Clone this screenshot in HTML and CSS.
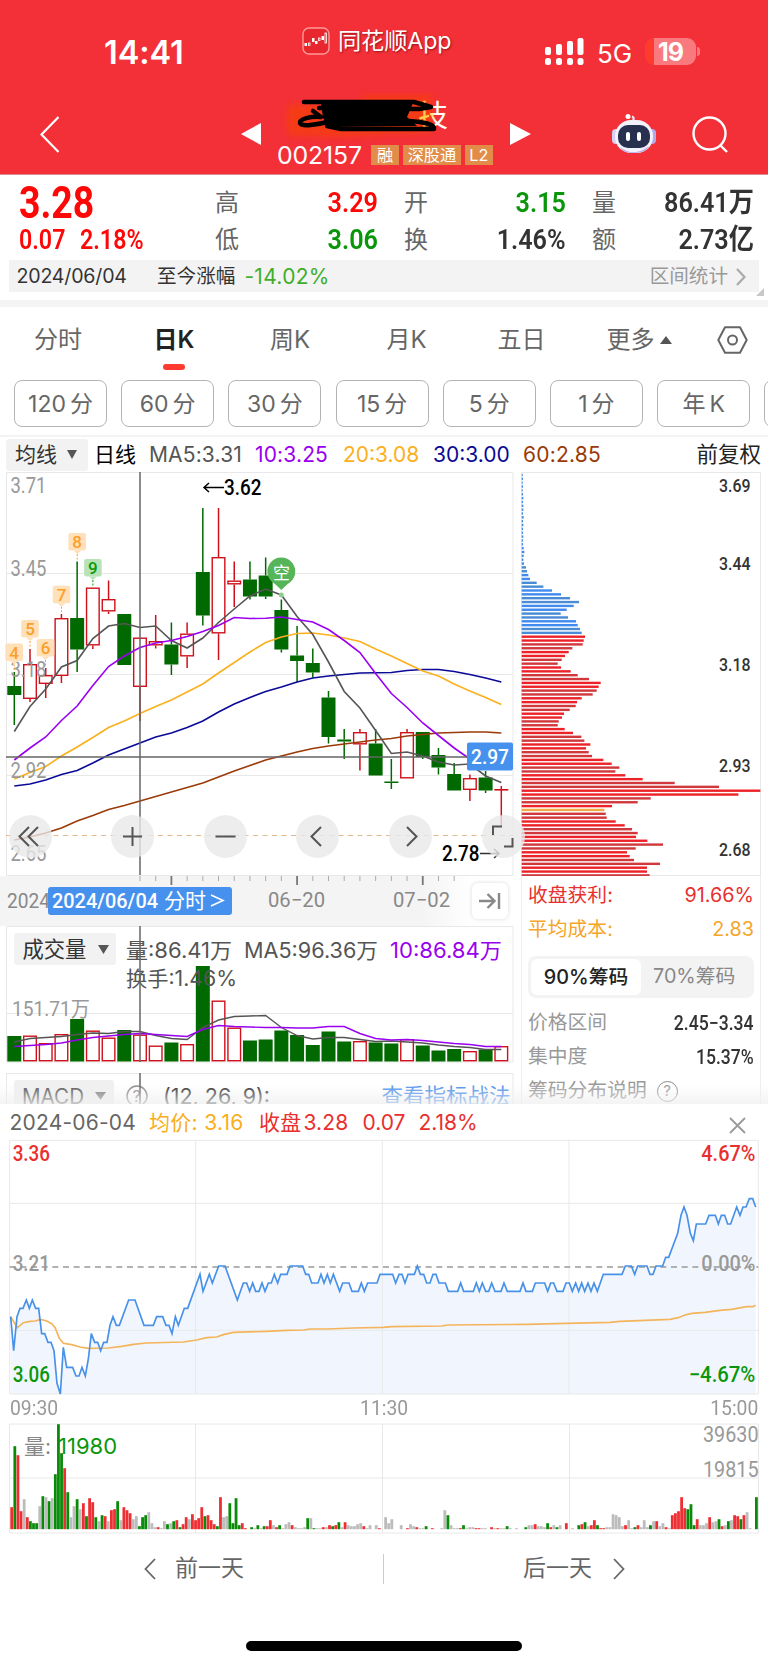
FILE: index.html
```html
<!DOCTYPE html>
<html lang="zh-CN">

<head>
    <meta charset="UTF-8">
    <meta name="viewport" content="width=device-width, initial-scale=1.0">
    <title>002157 日K</title>
    <link rel="stylesheet" href="styles.css">
</head>

<body>
    <!-- 顶部 -->
    <header class="header">
        <div class="status">
            <div class="time">14:41</div>
            <div class="brand">
                <svg width="28" height="28" viewBox="0 0 28 28">
                    <rect x="1" y="1" width="26" height="26" rx="6" fill="#e8262e" stroke="#ff9a96" stroke-width="1.4" />
                    <g fill="#fff">
                        <rect x="2.500" y="16" width="2.500" height="3" />
                        <rect x="10" y="11" width="2.500" height="4" />
                        <rect x="13" y="14" width="2.500" height="3" />
                        <rect x="19.500" y="9" width="2.500" height="4" />
                    </g>
                    <g fill="none" stroke="#fff" stroke-width=".8">
                        <rect x="6.500" y="16" width="1.500" height="2.500" />
                        <rect x="16.500" y="11" width="1.500" height="2.500" />
                        <rect x="23" y="6" width="1.500" height="10" />
                    </g>
                </svg>
                <span>同花顺App</span>
            </div>
            <svg class="signal" width="39" height="28" viewBox="0 0 39 28" fill="#fff">
                <rect x="0" y="9" width="6" height="8" rx="2" />
                <rect x="11" y="6" width="6" height="11" rx="2" />
                <rect x="22" y="3" width="6" height="14" rx="2" />
                <rect x="32.500" y="0" width="6" height="17" rx="2" />
                <rect x="0" y="20" width="6" height="7" rx="2.500" />
                <rect x="11" y="20" width="6" height="7" rx="2.500" />
                <rect x="22" y="20" width="6" height="7" rx="2.500" />
                <rect x="32.500" y="20" width="6" height="7" rx="2.500" />
            </svg>
            <div class="net">5G</div>
            <div class="battery"><b>19</b></div>
            <i class="battery-cap"></i>
        </div>
        <div class="nav">
            <svg class="back" width="20" height="37" viewBox="0 0 20 37" fill="none" stroke="#fff" stroke-width="2.200">
                <path d="M18.500 1 1.500 18.500 18.500 36" />
            </svg>
            <svg class="prev" width="20" height="22" viewBox="0 0 20 22" fill="#fff">
                <path d="M20 0V22L0 11Z" />
            </svg>
            <div class="title">
                <svg width="176" height="52" viewBox="278 92 176 52">
                    <defs>
                        <filter id="soft" x="-20%" y="-30%" width="140%" height="160%">
                            <feGaussianBlur stdDeviation="3" />
                        </filter>
                        <linearGradient id="tint">
                            <stop offset="0.4" stop-color="#ffcf4a" />
                            <stop offset="0.6" stop-color="#fff" />
                        </linearGradient>
                    </defs>
                    <path d="M288 105 364 103V95H433V132L336 137 288 135Z" fill="#f53a17" filter="url(#soft)" />
                    <text x="419" y="126" font-size="30" fill="url(#tint)">技</text>
                    <path d="M322 103 414 103 408 117 418 126 330 127 324 118Z" fill="#000" />
                    <g fill="none" stroke="#000" stroke-width="4.500" stroke-linecap="round" stroke-linejoin="round">
                        <path d="M305 102H415L432 107 420 109 320 108" />
                        <path d="M314 111 322 117C312 116 300 119 301 123S318 125 332 121" />
                        <path d="M328 126 342 129 435 129C436 124 424 122 410 121" />
                    </g>
                </svg>
                <div class="code">
                    <span class="num">002157</span><em>融</em><em>深股通</em><em>L2</em>
                </div>
            </div>
            <svg class="next" width="21" height="22" viewBox="0 0 21 22" fill="#fff">
                <path d="M0 0V22L21 11Z" />
            </svg>
            <svg class="robot" width="44" height="40" viewBox="0 0 44 40">
                <path d="M18 8C22 7 23 4 20 2.500" fill="none" stroke="#e9e6f8" stroke-width="2" />
                <circle cx="16" cy="2.500" r="2.500" fill="#fff" />
                <rect x="0" y="15" width="8" height="15" rx="4" fill="#d5cff2" />
                <rect x="36" y="15" width="8" height="15" rx="4" fill="#b3a8ea" />
                <rect x="3" y="6" width="38" height="33" rx="16" fill="#f3f1fc" />
                <path d="M8 33Q22 44 37 32 34 39 22 39 11 39 8 33" fill="#b7aaea" />
                <rect x="6" y="11" width="32" height="23" rx="10" fill="#27304f" />
                <rect x="14" y="18" width="4" height="9" rx="2" fill="#fff" />
                <rect x="25" y="18" width="4" height="9" rx="2" fill="#fff" />
            </svg>
            <svg class="search" width="37" height="37" viewBox="0 0 37 37" fill="none" stroke="#fff" stroke-width="2.400">
                <circle cx="17.500" cy="17.500" r="16" />
                <path d="M28 29 35 36" />
            </svg>
        </div>
    </header>

    <!-- 报价 -->
    <section class="quote">
        <div class="price red"><b class="din">3.28</b></div>
        <div class="cell"><span>高</span><b class="din red">3.29</b></div>
        <div class="cell"><span>开</span><b class="din green">3.15</b></div>
        <div class="cell"><span>量</span><b class="din">86.41万</b></div>
        <div class="change red"><b class="din">0.07</b><b class="din">2.18%</b></div>
        <div class="cell"><span>低</span><b class="din green">3.06</b></div>
        <div class="cell"><span>换</span><b class="din">1.46%</b></div>
        <div class="cell"><span>额</span><b class="din">2.73亿</b></div>
    </section>
    <div class="range">
        <span class="range-date">2024/06/04</span>
        <span>至今涨幅</span>
        <span class="range-value">-14.02%</span>
        <span class="range-link">区间统计</span>
        <svg width="10" height="18" viewBox="0 0 10 18" fill="none" stroke="#aaa" stroke-width="2.200">
            <path d="M1 1 8.500 9 1 17" />
        </svg>
        <i class="corner"></i>
    </div>
    <div class="band"></div>

    <!-- 周期 -->
    <nav class="tabs">
        <span>分时</span>
        <span class="active">日K</span>
        <span>周K</span>
        <span>月K</span>
        <span>五日</span>
        <span class="more">更多<i class="tri up"></i></span>
        <svg width="31" height="28" viewBox="0 0 31 28" fill="none" stroke="#666" stroke-width="2">
            <path d="M8 1.200H23L29.700 14 23 26.800H8L1.300 14Z" stroke-linejoin="round" />
            <circle cx="15.500" cy="14" r="4.500" />
        </svg>
    </nav>
    <div class="chips">
        <button>120<i></i>分</button>
        <button>60<i></i>分</button>
        <button>30<i></i>分</button>
        <button>15<i></i>分</button>
        <button>5<i></i>分</button>
        <button>1<i></i>分</button>
        <button>年<i></i>K</button>
        <button></button>
    </div>
    <div class="legend">
        <span class="select">均线<i class="tri"></i></span>
        <span class="l-day">日线</span>
        <span class="l-ma5">MA5:3.31</span>
        <span class="l-ma10">10:3.25</span>
        <span class="l-ma20">20:3.08</span>
        <span class="l-ma30">30:3.00</span>
        <span class="l-ma60">60:2.85</span>
        <span class="l-fq">前复权</span>
    </div>

    <!-- 图表 -->
    <main class="charts">
        <div class="left">
            <div class="kbox">
                <svg id="kline" width="521" height="404" viewBox="0 472 521 404">
                    <path class="grid" d="M6.500 472.500H513V875.500H6.500ZM6.500 573.500H513M6.500 674.500H513M6.500 775.500H513" />
                    <path d="M6 835.500H513" stroke="#e3b98c" stroke-dasharray="5 4.500" />
                    <g id="candles"></g>
                    <g id="lines" fill="none" stroke-width="1.600"></g>
                    <g class="din-t" font-size="22" fill="#999">
                        <text x="10.500" y="493" textLength="36" lengthAdjust="spacingAndGlyphs">3.71</text>
                        <text x="10.500" y="576" textLength="36" lengthAdjust="spacingAndGlyphs">3.45</text>
                        <text x="10.500" y="677" textLength="36" lengthAdjust="spacingAndGlyphs">3.18</text>
                        <text x="10.500" y="778" textLength="36" lengthAdjust="spacingAndGlyphs">2.92</text>
                        <text x="10.500" y="861" textLength="36" lengthAdjust="spacingAndGlyphs">2.65</text>
                    </g>
                    <g id="marks" class="din-t din-500" font-size="17" text-anchor="middle"></g>
                    <path d="M281.300 590 275 584A14 14 0 1 1 287.600 584Z" fill="#55b558" />
                    <circle cx="281.300" cy="595" r="2.500" fill="#8ccf8c" />
                    <text x="273" y="578.500" font-size="17" fill="#fff">空</text>
                    <path d="M140 472V875M6 757H513" stroke="#666" stroke-width="1.500" />
                    <g class="din-t din-500" font-size="22">
                        <path d="M204 487.500H224M209 483 204 487.500 209 492" fill="none" stroke="#000" stroke-width="1.500" />
                        <text x="224" y="495" textLength="37.500" lengthAdjust="spacingAndGlyphs">3.62</text>
                        <path d="M480 853.500H499M494 849 499 853.500 494 858" fill="none" stroke="#333" stroke-width="1.500" />
                        <text x="442" y="861" textLength="37.500" lengthAdjust="spacingAndGlyphs">2.78</text>
                    </g>
                    <rect x="467" y="742.500" width="46" height="28" rx="2" fill="#4791ee" />
                    <text class="din-t din-500" x="471" y="764" font-size="21" fill="#fff" textLength="38" lengthAdjust="spacingAndGlyphs">2.97</text>
                </svg>
                <div class="tools">
                    <svg viewBox="0 0 43 43"><path d="M20 12 10.500 21.500 20 31M29 12 19.500 21.500 29 31" /></svg>
                    <svg viewBox="0 0 43 43"><path d="M12 21.500H31M21.500 12V31" /></svg>
                    <svg viewBox="0 0 43 43"><path d="M11.500 21.500H31.500" /></svg>
                    <svg viewBox="0 0 43 43"><path d="M25 12 15.500 21.500 25 31" /></svg>
                    <svg viewBox="0 0 43 43"><path d="M18 12 27.500 21.500 18 31" /></svg>
                    <svg viewBox="0 0 43 43"><path d="M11 20V11.500H20M30.500 23V31.500H22" /></svg>
                </div>
            </div>
            <div class="axis">
                <svg id="axis" width="521" height="50" viewBox="0 876 521 50">
                    <g id="ticks" stroke="#aaa"></g>
                    <g class="din-t" font-size="21" fill="#888">
                        <text x="7" y="907.500" textLength="43" lengthAdjust="spacingAndGlyphs">2024</text>
                        <text x="268" y="907" textLength="57" lengthAdjust="spacingAndGlyphs">06−20</text>
                        <text x="393" y="907" textLength="57" lengthAdjust="spacingAndGlyphs">07−02</text>
                    </g>
                    <rect x="48" y="887" width="184" height="28" rx="3" fill="#4791ee" />
                    <text class="din-t din-500" x="52" y="907.500" font-size="21" fill="#fff" textLength="106" lengthAdjust="spacingAndGlyphs">2024/06/04</text>
                    <text x="164" y="908" font-size="21" fill="#fff">分时</text>
                    <path d="M211 895 223 900.500 211 906" fill="none" stroke="#fff" stroke-width="1.600" />
                </svg>
                <span class="to-end">
                    <svg width="22" height="18" viewBox="0 0 22 18" fill="none" stroke="#888" stroke-width="2.400">
                        <path d="M0 9H15M8.500 2 15.500 9 8.500 16M20 1V17" />
                    </svg>
                </span>
            </div>
            <svg id="volume" width="521" height="147" viewBox="0 926 521 147">
                <path class="grid" d="M6.500 926.500H513V1062H6.500ZM6.500 1013.500H513" />
                <text x="12" y="1016" class="din-t" font-size="21" fill="#999" textLength="78" lengthAdjust="spacingAndGlyphs">151.71万</text>
                <g id="volBars"></g>
                <g id="volLines" fill="none" stroke-width="1.400"></g>
                <rect x="14" y="933" width="102" height="32" rx="3" fill="#f2f2f2" />
                <text x="22.500" y="957" font-size="21.300" fill="#333">成交量</text>
                <path d="M98 945H109L103.500 954Z" fill="#555" />
                <g font-size="21" fill="#555">
                    <text x="126" y="957.500" textLength="106" lengthAdjust="spacingAndGlyphs">量:86.41万</text>
                    <text x="244" y="957.500" textLength="134" lengthAdjust="spacingAndGlyphs">MA5:96.36万</text>
                    <text x="390" y="957.500" textLength="112" lengthAdjust="spacingAndGlyphs" fill="#9a00f0">10:86.84万</text>
                    <text x="126" y="986" textLength="111" lengthAdjust="spacingAndGlyphs">换手:1.46%</text>
                </g>
                <path d="M140 926V1062" stroke="#666" stroke-width="1.500" />
            </svg>
            <svg width="521" height="31" viewBox="0 1073 521 31">
                <path class="grid" d="M6.500 1104V1073.500H513V1104" />
                <rect x="14" y="1080" width="100" height="30" rx="3" fill="#f0f0f0" />
                <text x="22" y="1103.500" font-size="21" fill="#555" textLength="62" lengthAdjust="spacingAndGlyphs">MACD</text>
                <path d="M95 1092H106L100.500 1100Z" fill="#777" />
                <circle cx="137" cy="1096" r="10" fill="none" stroke="#888" stroke-width="1.500" />
                <text x="132.500" y="1102" font-size="16" fill="#888">?</text>
                <text x="163" y="1103.500" font-size="21" fill="#333" textLength="107" lengthAdjust="spacingAndGlyphs">(12, 26, 9):</text>
                <text x="381.500" y="1104" font-size="21.500" fill="#4a90ee">查看指标战法</text>
                <path d="M140 1073V1104" stroke="#666" stroke-width="1.500" />
            </svg>
        </div>
        <div class="right">
            <svg id="chips" width="247" height="404" viewBox="521 472 247 404">
                <path class="grid" d="M521.500 472.500H760.500V875.500H521.500Z" />
                <g id="chipBars"></g>
                <g class="din-t din-500" font-size="17.500" fill="#333">
                    <text x="719" y="492" textLength="31.500" lengthAdjust="spacingAndGlyphs">3.69</text>
                    <text x="719" y="569.500" textLength="31.500" lengthAdjust="spacingAndGlyphs">3.44</text>
                    <text x="719" y="670.500" textLength="31.500" lengthAdjust="spacingAndGlyphs">3.18</text>
                    <text x="719" y="771.500" textLength="31.500" lengthAdjust="spacingAndGlyphs">2.93</text>
                    <text x="719" y="856" textLength="31.500" lengthAdjust="spacingAndGlyphs">2.68</text>
                </g>
            </svg>
            <div class="info">
                <p class="i-red"><span>收盘获利:</span><span>91.66%</span></p>
                <p class="i-orange"><span>平均成本:</span><span>2.83</span></p>
                <div class="switch"><b>90%筹码</b><span>70%筹码</span></div>
                <p><span>价格区间</span><b class="din">2.45−3.34</b></p>
                <p><span>集中度</span><b class="din">15.37%</b></p>
                <p class="explain"><span>筹码分布说明</span><i>?</i></p>
            </div>
        </div>
        <div class="fade"></div>
    </main>

    <!-- 分时 -->
    <section class="intraday">
        <div class="day-head">
            <span class="d-date">2024-06-04</span>
            <span class="d-avg">均价: 3.16</span>
            <span class="d-close">收盘<i></i>3.28</span>
            <span class="d-diff">0.07</span>
            <span class="d-pct">2.18%</span>
            <svg width="17" height="17" viewBox="0 0 17 17" fill="none" stroke="#999" stroke-width="1.800">
                <path d="M1 1 16 16M16 1 1 16" />
            </svg>
        </div>
        <!-- 坐标放大三倍，线条更细腻 -->
        <svg width="768" height="257" viewBox="0 117 2304 771" class="day-chart">
            <polygon id="dayArea" fill="#f1f6fe" />
            <path class="grid" stroke-width="3" d="M29 121H2275V882H29ZM587 121V882M1147 121V882M1707 121V882M29 310H2275M29 691H2275" />
            <path d="M29 501H2275" stroke="#999" stroke-width="4" stroke-dasharray="18 14" fill="none" />
            <polyline fill="none" stroke="#f4b45c" stroke-width="5" points="32,650 52,683 70,668 90,664 105,663 122,658 140,663 155,671 165,682 178,715 190,730 215,734 240,741 265,745 325,744 365,739 400,733 440,729 550,726 590,720 620,713 650,711 670,704 700,697 800,694 860,691 910,690 930,687 980,687 1060,684 1150,682 1175,680 1325,678 1345,675 1580,673 1700,670 1830,667 1860,664 2010,658 2035,653 2055,645 2075,640 2115,637 2160,631 2195,628 2240,620 2258,620 2267,616" />
            <polyline id="dayLine" fill="none" stroke="#4791e8" stroke-width="5" />
            <g class="din-t din-500" font-size="64">
                <text x="38" y="183" fill="#e8302f" textLength="112" lengthAdjust="spacingAndGlyphs">3.36</text>
                <text x="38" y="514" fill="#999" textLength="112" lengthAdjust="spacingAndGlyphs">3.21</text>
                <text x="38" y="845" fill="#0a960a" textLength="112" lengthAdjust="spacingAndGlyphs">3.06</text>
                <text x="2104" y="183" fill="#e8302f" textLength="162" lengthAdjust="spacingAndGlyphs">4.67%</text>
                <text x="2104" y="514" fill="#999" textLength="162" lengthAdjust="spacingAndGlyphs">0.00%</text>
                <text x="2066" y="845" fill="#0a960a" textLength="200" lengthAdjust="spacingAndGlyphs">−4.67%</text>
            </g>
        </svg>
        <div class="day-time"><b class="din">09:30</b><b class="din">11:30</b><b class="din">15:00</b></div>
        <svg width="768" height="111" viewBox="0 1422.500 768 111" class="day-vol">
            <path class="grid" d="M9.500 1423.500H758.500V1532.500H9.500ZM9.500 1477.500H758.500M195.500 1423.500V1532.500M382.500 1423.500V1532.500M569.500 1423.500V1532.500" />
            <text x="24" y="1453" font-size="21" fill="#888">量:</text>
            <g id="dayBars"></g>
            <text x="58" y="1453.500" font-size="21.500" fill="#0a960a" textLength="59" lengthAdjust="spacingAndGlyphs">11980</text>
            <g class="din-t" font-size="21.500" fill="#999">
                <text x="703" y="1441.500" textLength="55.500" lengthAdjust="spacingAndGlyphs">39630</text>
                <text x="703" y="1476.500" textLength="55.500" lengthAdjust="spacingAndGlyphs">19815</text>
            </g>
        </svg>
    </section>

    <footer class="footer">
        <div class="pager">
            <div class="pager-prev">
                <svg width="12" height="22" viewBox="0 0 12 22" fill="none" stroke="#666" stroke-width="1.800"><path d="M11 1 1.500 11 11 21" /></svg>
                前一天
            </div>
            <div class="pager-next">
                后一天
                <svg width="12" height="22" viewBox="0 0 12 22" fill="none" stroke="#666" stroke-width="1.800"><path d="M1 1 10.500 11 1 21" /></svg>
            </div>
        </div>
        <div class="home"></div>
    </footer>

    <script>
        const RED = '#d0101a'
        const GREEN = '#006a00'
        const cx = i => 14.3 + 15.71 * i
        const $ = id => document.getElementById(id)

        // K线 [颜色, 实体上, 实体下, 最高, 最低]
        const candles = [
            ['g', 686, 695, 672, 725], ['r', 664, 699, 649, 702], ['r', 675, 684, 668, 698], ['r', 618, 676, 614, 683],
            ['g', 618, 649.5, 561.5, 672], ['r', 587.5, 645.5, 587.5, 649], ['r', 599, 611.5, 580.5, 614], ['g', 614, 665, 614, 665],
            ['r', 637.5, 687, 637.5, 721], ['r', 641, 645.5, 615, 648.5], ['g', 644.5, 664.5, 622.5, 675], ['r', 633.5, 656.5, 622.5, 668],
            ['g', 572, 615.5, 508, 625.5], ['r', 557, 633.5, 508, 660], ['r', 580.5, 584.5, 561.5, 607], ['g', 579.5, 596.5, 561.5, 599.5],
            ['g', 575.5, 596.5, 557.5, 599], ['g', 610, 649.5, 599.5, 652.5], ['g', 655.5, 661, 626, 682], ['g', 663, 672.5, 648.5, 677.5],
            ['g', 697.5, 737, 691, 743.5], ['g', 739.5, 741.5, 729, 759], ['r', 732, 744.5, 729, 770.5], ['g', 743.5, 775.5, 729, 775.5],
            ['g', 781.5, 783, 759, 789], ['r', 732, 778.5, 729, 778.5], ['g', 732, 757, 732, 759], ['g', 755, 767.5, 748, 774.5],
            ['g', 774, 790.5, 763, 790.5], ['r', 778, 790, 774.5, 801], ['g', 777.5, 790.5, 771, 793], ['r', 789, 789.5, 786, 827]
        ]
        let html = ''
        candles.forEach(([c, top, bottom, high, low], i) => {
            const x = cx(i)
            const color = c == 'r' ? RED : GREEN
            html += `<path d="M${x} ${high}V${top}M${x} ${bottom}V${low}" stroke="${color}" stroke-width="1.5"/>`
            if (c == 'g') {
                html += `<rect x="${x - 7}" y="${top}" width="14" height="${bottom - top}" fill="${color}"/>`
            } else {
                html += `<rect x="${x - 6.3}" y="${top + .7}" width="12.6" height="${Math.max(bottom - top - 1.4, .2)}" fill="#fff" stroke="${color}" stroke-width="1.4"/>`
            }
        })
        $('candles').innerHTML = html

        // 均线
        const ma = {
            '#9a3a08': [840, 837, 833, 828, 821, 815.5, 809.5, 805.5, 801, 796.5, 792, 787.5, 783, 777, 771, 765.5, 760, 756, 752, 748.5, 746, 744, 742, 740, 738.5, 736, 734.5, 733, 732.5, 732, 732, 733],
            '#0a0a96': [786, 784, 780, 774.5, 770.5, 763, 755, 749, 743, 737, 733, 727.5, 721, 712, 704, 697.5, 691.5, 687, 682, 678, 676, 674.5, 673, 672.8, 672.5, 670.5, 669.5, 669.5, 671.5, 674.5, 678, 682],
            '#fbb01c': [779, 772.5, 766.5, 756, 747, 737.5, 727.5, 721, 713.5, 706.5, 700, 692, 684, 673, 662.5, 652, 642.5, 637, 633.5, 633, 635, 638, 641.5, 649, 656, 663.5, 671, 676, 684, 691, 697.5, 704.5],
            '#555': [731.5, 706.5, 689, 667, 660.5, 638.5, 626, 623.5, 627.5, 626, 640.5, 648, 638, 622.5, 609, 596, 589, 595, 616.5, 634.5, 662, 691.5, 708, 730.5, 753.5, 752, 756, 762, 765, 764, 776, 782.5],
            '#9a00f0': [760, 748, 737, 720.5, 706, 685.5, 666.5, 656, 647.5, 643, 640.5, 636.5, 631.5, 625.5, 617.5, 618.5, 618.3, 617, 619.5, 622, 629.5, 640.5, 652.5, 673.5, 693.5, 707.5, 723, 735.5, 748, 759, 768]
        }
        const volMa = {
            '#555': [1042, 1038.5, 1037.5, 1036.5, 1034.5, 1033, 1033.5, 1031.5, 1031.5, 1035.5, 1038.5, 1039.5, 1027.5, 1020, 1016.5, 1016, 1015.5, 1027.5, 1035.5, 1039, 1037.5, 1037.5, 1039.5, 1041.5, 1041, 1042, 1043, 1045, 1046.5, 1047.5, 1049.5, 1049.5],
            '#9a00f0': [1046.5, 1045.5, 1044.5, 1043, 1040, 1037.5, 1036, 1034.5, 1033.5, 1034.5, 1035.5, 1036.5, 1029.5, 1025.5, 1026.5, 1027, 1027.5, 1027.5, 1028, 1028, 1026.5, 1026.5, 1033.5, 1038.5, 1040, 1039.5, 1040.5, 1042, 1043.5, 1044.5, 1046.5, 1046.5]
        }
        function drawLines(id, data) {
            let s = ''
            for (const color in data) {
                s += `<polyline stroke="${color}" points="${data[color].map((y, i) => cx(i) + ',' + y).join(' ')}"/>`
            }
            $(id).innerHTML = s
        }
        drawLines('lines', ma)
        drawLines('volLines', volMa)

        // 九转标记
        html = ''
        const marks = [[4, 14.2, 643.5], [5, 30, 620], [6, 45.5, 639], [7, 61.5, 585.7], [8, 77.2, 533], [9, 92.9, 559]]
        marks.forEach(([n, x, y]) => {
            const bg = n == 9 ? '#b8e3b8' : '#ffe0b8'
            const fg = n == 9 ? '#0a9a0a' : '#fb9f2c'
            html += `<rect x="${x - 8.8}" y="${y}" width="17.6" height="17.6" rx="2" fill="${bg}"/>`
                + `<path d="M${x - 4} ${y + 17.5}H${x + 4}L${x} ${y + 21}Z" fill="${bg}"/>`
                + `<path d="M${x} ${y + 21}V${y + 28}" stroke="${fg}" stroke-width="1" stroke-dasharray="2 1.5"/>`
                + `<text x="${x}" y="${y + 15}" fill="${fg}">${n}</text>`
        })
        $('marks').innerHTML = html

        // 时间刻度
        html = ''
        for (let i = 8; i < 29; i++) {
            const big = i % 8 == 2
            html += `<path d="M${cx(i)} 876V${big ? 885 : 881}" ${big ? 'stroke="#777" stroke-width="1.8"' : ''}/>`
        }
        $('ticks').innerHTML = html

        // 成交量
        const vols = [1036, 1035.5, 1043, 1034, 1019, 1030.5, 1037.5, 1030, 1034.5, 1045.5, 1042.5, 1044, 966, 1000.5, 1027.5, 1040.5, 1039.5, 1030.5, 1035, 1045, 1031.5, 1041.5, 1041, 1042.5, 1043.5, 1039, 1045.5, 1050.5, 1049, 1051, 1049.5, 1046]
        $('volBars').innerHTML = vols.map((y, i) => candles[i][0] == 'g'
            ? `<rect x="${cx(i) - 7}" y="${y}" width="14" height="${1061.5 - y}" fill="${GREEN}"/>`
            : `<rect x="${cx(i) - 6.3}" y="${y + .7}" width="12.6" height="${1060 - y}" fill="#fff" stroke="${RED}" stroke-width="1.4"/>`
        ).join('')

        // 筹码分布
        const tiny = [3, 4, 3, 4, 3, 4, 5, 4, 5, 5, 4, 6, 4, 5, 4, 4, 5, 4, 4, 6, 8, 6, 5, 7]
        const dist = tiny.concat([13, 16, 20, 25, 45, 65, 91, 118, 145, 172, 156, 135, 117, 139, 163, 168, 175, 180,
            190, 186, 183, 152, 141, 130, 120, 108, 118, 147, 168, 202, 237, 231, 225, 213, 180, 166, 162, 144, 127, 121, 111, 108, 129, 154, 179, 188, 206, 193, 201, 211, 245, 270, 293, 281, 311, 363, 459, 592, 716, 650, 387, 348, 271,
            248, 252, 255, 282, 309, 331, 348, 343, 377, 424, 342, 316, 324, 337, 415, 376, 376, 384])
        $('chipBars').innerHTML = dist.map((w, i) => {
            const y = 567.4 + (i - 24) * 3.85
            let color = i % 4 < 2 ? '#d0383c' : '#ed2229'
            if (i < 42) color = i % 4 < 2 ? '#4a8bd6' : '#408af0'
            if (i == 87) color = '#eeaa44'
            return `<rect x="521.7" y="${y - 1.2}" width="${w / 3}" height="2.4" fill="${color}"/>`
        }).join('')

        // 分时走势
        const day = '32,650 41,752 51,650 60,625 69,625 79,600 88,625 97,600 107,625 116,625 125,701 134,701 144,727 153,727 162,752 171,850 181,882 190,742 200,802 218,802 228,828 237,828 246,802 256,828 265,777 274,701 284,727 293,727 302,752 311,727 321,727 330,676 339,650 349,676 358,676 386,600 405,600 432,676 460,676 470,650 488,650 498,676 507,676 516,701 526,650 535,676 553,625 563,625 600,523 609,574 628,523 637,549 656,498 675,498 712,600 730,549 740,549 749,574 758,549 767,574 777,574 786,549 795,574 805,549 814,549 823,523 833,549 842,523 861,523 870,498 908,498 917,523 926,523 935,549 954,549 963,523 972,549 982,523 991,549 1000,523 1019,574 1028,549 1047,549 1056,574 1075,574 1084,549 1093,574 1103,549 1131,549 1140,523 '
            + '1178,523 1187,549 1197,523 1206,523 1215,549 1224,523 1243,523 1252,498 1261,523 1271,523 1280,549 1290,549 1299,523 1308,523 1317,549 1336,549 1345,574 1373,574 1382,549 1391,574 1420,574 1429,549 1438,574 1447,549 1457,574 1466,574 1475,549 1485,574 1503,574 1512,549 1522,574 1560,574 1569,549 1578,574 1597,574 1606,549 1634,549 1643,574 1652,549 1661,549 1671,574 1689,574 1698,549 1708,549 1717,574 1727,549 1736,574 1745,549 1754,574 1764,549 1773,574 1782,549 1792,574 1810,523 1866,523 1876,498 1894,498 1904,523 1913,498 1941,498 1950,523 1959,523 1968,498 1988,498 1997,472 2006,472 2033,400 2043,346 2052,321 2061,346 2071,400 2080,422 2089,372 2117,372 2127,346 2146,346 2155,372 2164,346 2174,346 2183,372 2192,372 2210,321 2220,346 2229,321 2238,321 2248,296 2258,296 2267,321'
        $('dayLine').setAttribute('points', day)
        $('dayArea').setAttribute('points', '32,882 ' + day + ' 2267,882')

        // 分时成交量
        const dayVol = 'r22 g83 r74 r18 n30 r12 g8 g6 g6 n23 g33 n32 g28 n31 g55 g105 g76 r61 g37 n12 n23 g30 n20 r26 g13 r31 r27 g12 n8 g14 r13 n8 r19 r20 g28 n9 r22 r19 r16 n10 n13 g3 g12 g14 n17 n6 n2 r2 n1 n8 g5 n6 g8 r9 g2 r5 r12 n10 r15 r9 r11 r22 g13 r14 r9 r5 g3 r32 n12 n13 g26 g6 g31 g4 r6 r1 n0 g2 n1 g4 n1 g3 r3 r9 n4 r2 g4 n1 n5 n7 r4 n2 n1 n1 n2 g11 n11 g1 n1 n1 r2 n2 r4 g3 r4 g7 n2 r7 n4 n3 n3 n5 n6 r3 n1 n4 n0 n4 r1 n0 n12 n6 n10 n0 n0 n4 n0 r1 n5 n3 r2 n1 n1 g3 n0 r1 n0 n0 n1 n19 g14 n4 n1 n1 r1 g4 n1 n2 n2 r1 r1 n1 n1 n0 r2 n1 r1 n1 n1 g3 n1 n0 n1 n0 n0 g2 n4 n4 r5 n3 n3 n2 g6 r2 n4 g2 n4 n0 r6 n0 n1 n0 g4 r5 g7 n3 r4 r9 g4 r1 r1 n2 n2 n15 n14 n12 n3 r4 n9 n1 g2 r4 n2 n9 n2 g4 n8 r8 n3 n6 r2 n1 r14 r16 r18 r32 r21 g20 g25 g4 r10 n4 n4 n6 r12 n7 n8 g10 r3 n4 g8 n9 r14 r13 g10 r14 n17 n1 n0 g32'.split(' ')
        const volColor = { r: '#ed2f33', g: '#098b09', n: '#bcbcbc' }
        $('dayBars').innerHTML = dayVol.map((v, i) => {
            const h = +v.slice(1)
            const x = 10.3 + i * (744.7 / (dayVol.length - 1))
            return `<rect x="${x.toFixed(2)}" y="${1528.7 - h}" width="2.8" height="${h}" fill="${volColor[v[0]]}"/>`
        }).join('')
    </script>
</body>

</html>
```
FILE: styles.css
```css
* {
    margin: 0;
    padding: 0;
    box-sizing: border-box;
}

body {
    width: 768px;
    height: 1665px;
    overflow: hidden;
    background-color: #fff;
    color: #333;
    font-family: Inter, "Noto Sans CJK SC", sans-serif;
    line-height: 1;
}

svg {
    display: block;
    flex-shrink: 0;
}

span,
b,
em {
    white-space: nowrap;
}

.grid {
    fill: none;
    stroke: #e8e8e8;
}

.din {
    display: inline-block;
    font-family: Roboto, "Noto Sans CJK SC", sans-serif;
    font-weight: 500;
    transform: scaleX(.87);
    transform-origin: right;
}

.din-t {
    font-family: Roboto, "Noto Sans CJK SC", sans-serif;
}

.din-500 {
    font-weight: 500;
}

.red {
    color: #fd0707 !important;
}

.green {
    color: #0a960a !important;
}

/* 顶部 */
.header {
    height: 175px;
    background-color: #f33038;
    border-bottom: 1px solid #d88a8e;
    color: #fff;
}

.status {
    display: flex;
    height: 90px;
    padding-left: 104px;
}

.time {
    width: 198px;
    padding-top: 37px;
    font-size: 32.5px;
    font-weight: 600;
    letter-spacing: -.1px;
}

.brand {
    display: flex;
    gap: 8px;
    width: 243px;
    padding-top: 27px;
    font-size: 23.2px;
    letter-spacing: -.1px;
    text-shadow: 1px 1px 2px rgba(90, 0, 0, .6);
}

.brand span {
    padding-top: 3px;
}

.signal {
    margin-top: 38px;
}

.net {
    width: 61px;
    padding: 41px 0 0 13px;
    font-size: 26px;
}

.battery {
    width: 51px;
    height: 27px;
    margin-top: 38px;
    border-radius: 9px;
    background: linear-gradient(90deg, #ff3b30 9px, #f8797e 9px);
    font-size: 25px;
    line-height: 28px;
    text-align: center;
}

.battery b {
    letter-spacing: -1px;
}

.battery-cap {
    width: 3px;
    height: 9px;
    margin: 47px 0 0 1px;
    border-radius: 0 3px 3px 0;
    background-color: #f8797e;
}

.nav {
    display: flex;
    height: 84px;
    padding-left: 40px;
}

.back {
    margin: 26px 181px 0 0;
}

.prev,
.next {
    margin-top: 33px;
}

.title {
    width: 249px;
    padding: 2px 0 0 16px;
}

.code {
    display: flex;
    gap: 4px;
    margin-top: 1px;
    font-size: 25px;
}

.code .num {
    width: 90px;
    font-size: 24.8px;
    line-height: 20px;
    letter-spacing: -.1px;
}

.code em {
    height: 20px;
    padding: 0 4.5px;
    background-color: #e18d49;
    font-size: 16.2px;
    font-style: normal;
    line-height: 20px;
}

.code em:first-of-type {
    padding: 0 6px;
}

.robot {
    margin: 24px 36px 0 81px;
}

.search {
    margin-top: 26px;
}

/* 报价 */
.quote {
    display: grid;
    grid-template-columns: 170px 163px 162px 162px;
    grid-template-rows: 44px 30px;
    column-gap: 26px;
    height: 85px;
    padding: 6px 0 0 19px;
    align-items: center;
}

.quote .din {
    font-size: 28px;
    font-weight: 600;
    transform: scaleX(.9);
}

.quote .price .din {
    margin-top: 2px;
    font-size: 43.5px;
    font-weight: 700;
    transform: scaleX(.86);
    transform-origin: left;
}

.quote .change {
    display: flex;
    gap: 7px;
}

.quote .change .din {
    font-size: 27px;
    transform: scaleX(.86);
    transform-origin: left;
}

.cell {
    display: flex;
    justify-content: space-between;
    align-items: center;
}

.cell span {
    color: #666;
    font-size: 24px;
}

.range {
    position: relative;
    display: flex;
    align-items: center;
    height: 32px;
    margin: 0 9px;
    padding: 1px 13px 0 7.5px;
    background-color: #f3f3f3;
    font-size: 19.6px;
}

.range-date {
    width: 140.5px;
    letter-spacing: -.2px;
}

.range-value {
    margin-left: 9px;
    color: #3fae2a;
    font-size: 21px;
    letter-spacing: .3px;
}

.range-link {
    margin: 0 8px 0 auto;
    color: #999;
}

.corner {
    position: absolute;
    right: -5px;
    bottom: -4px;
    border: 4.5px solid #c8c8c8;
    border-top-color: transparent;
    border-left-color: transparent;
}

.band {
    height: 7px;
    margin-top: 8px;
    background-color: #f4f4f4;
}

/* 周期 */
.tabs {
    display: grid;
    grid-template-columns: 116px 116px 116px 117px 113px 122px 68px;
    align-items: center;
    height: 73px;
    padding-bottom: 8px;
    color: #666;
    font-size: 24px;
    text-align: center;
}

.tabs svg {
    margin-left: 16.5px;
}

.tabs .active {
    position: relative;
    color: #222;
    font-weight: 600;
}

.tabs .active::after {
    content: "";
    position: absolute;
    left: 47px;
    top: 36px;
    width: 22px;
    height: 6px;
    border-radius: 3px;
    background-color: #ff3b30;
}

.more {
    display: flex;
    align-items: center;
    justify-content: center;
    gap: 5px;
}

.tri {
    border: 5.5px solid transparent;
    border-top: 9px solid #555;
    border-bottom: 0;
}

.tri.up {
    border: 6px solid transparent;
    border-top: 0;
    border-bottom: 8px solid #555;
}

.chips {
    display: flex;
    gap: 14.2px;
    height: 57px;
    padding-left: 14px;
    overflow: hidden;
    border-bottom: 2px solid #f3f3f3;
}

.chips button {
    flex: 0 0 93px;
    height: 47px;
    padding-bottom: 3px;
    border: 1px solid #b4b4b4;
    border-radius: 8px;
    background-color: #fff;
    color: #666;
    font-family: inherit;
    font-size: 23px;
}

.chips i {
    padding-left: 4px;
}

.d-close i {
    padding-left: 2px;
}

.legend {
    display: flex;
    align-items: center;
    height: 35px;
    padding: 0 7px 0 6px;
    font-size: 21px;
}

.select {
    display: flex;
    align-items: center;
    gap: 10px;
    width: 82px;
    height: 32px;
    padding-left: 9px;
    border-radius: 3px;
    background-color: #f2f2f2;
}

.l-day {
    width: 61px;
    padding-left: 6px;
    color: #000;
}

.l-ma5 {
    width: 106px;
    color: #555;
    letter-spacing: .15px;
}

.l-ma10 {
    width: 88px;
    color: #9a00f0;
    letter-spacing: .15px;
}

.l-ma20 {
    width: 90px;
    color: #fbb01c;
}

.l-ma30 {
    width: 90px;
    color: #0a0a96;
}

.l-ma60 {
    color: #9a3a08;
    letter-spacing: .2px;
}

.l-fq {
    margin-left: auto;
    color: #222;
    font-size: 21.5px;
}

/* 图表 */
.charts {
    position: relative;
    display: flex;
    height: 632px;
    overflow: hidden;
}

.left {
    width: 521px;
}

.kbox {
    position: relative;
    z-index: 1;
}

.tools {
    position: absolute;
    left: 9px;
    top: 343px;
    display: flex;
    width: 516px;
    justify-content: space-between;
}

.tools svg {
    width: 43px;
    height: 43px;
    border-radius: 50%;
    background-color: rgba(232, 232, 232, .8);
    fill: none;
    stroke: #555;
    stroke-width: 2;
}

.tools svg:first-child {
    margin-right: 9px;
}

.axis {
    position: relative;
    width: 514px;
    background: linear-gradient(90deg, #f4f4f4 82%, #fff 92%);
}

.to-end {
    position: absolute;
    left: 472px;
    top: 7px;
    display: flex;
    align-items: center;
    justify-content: center;
    width: 36px;
    height: 36px;
    border-radius: 6px;
    background-color: #fff;
    box-shadow: 0 0 4px rgba(0, 0, 0, .15);
}

.right {
    width: 247px;
}

.info {
    width: 240px;
    height: 228px;
    padding: 3px 6px 0;
    border: solid #eee;
    border-width: 0 1px;
}

.info p {
    display: flex;
    justify-content: space-between;
    align-items: center;
    height: 34px;
    color: #999;
    font-size: 19.8px;
}

.info .din {
    color: #333;
    font-size: 20px;
    transform: scaleX(.88);
}

.info .i-red {
    color: #e8302f;
}

.info .i-orange {
    color: #f5a52a;
}

.switch {
    display: flex;
    align-items: center;
    height: 42px;
    margin: 9px 0 8px;
    padding: 3px;
    border-radius: 8px;
    background-color: #f3f3f3;
    color: #888;
    font-size: 19.8px;
}

.switch b {
    width: 110px;
    height: 36px;
    margin-right: 12px;
    border-radius: 6px;
    background-color: #fff;
    color: #222;
    font-weight: 500;
    line-height: 36px;
    text-align: center;
}

.info .explain {
    justify-content: flex-start;
    gap: 10px;
}

.explain i {
    width: 21px;
    height: 21px;
    border: 1.5px solid #888;
    border-radius: 50%;
    font-size: 15px;
    font-style: normal;
    line-height: 18px;
    text-align: center;
}

.fade {
    position: absolute;
    left: 0;
    right: 0;
    bottom: 0;
    height: 20px;
    background: linear-gradient(rgba(255, 255, 255, 0), rgba(240, 240, 240, .75));
}

/* 分时 */
.day-head {
    display: flex;
    align-items: center;
    height: 36px;
    padding: 0 22px 0 9.5px;
    font-size: 21px;
}

.d-date {
    width: 139.5px;
    color: #666;
    letter-spacing: .2px;
}

.d-avg {
    width: 110px;
    color: #f9ae1c;
    letter-spacing: .3px;
}

.d-close {
    width: 103.5px;
    letter-spacing: .2px;
}

.d-diff {
    width: 56px;
}

.d-close,
.d-diff,
.d-pct {
    color: #e8302f;
}

.day-head svg {
    margin: 6px 0 0 auto;
}

.day-chart {
    margin-top: -1px;
}

.day-time {
    display: flex;
    justify-content: space-between;
    height: 26.5px;
    padding: 0 10px;
    color: #999;
    font-size: 21px;
    line-height: 24px;
}

.day-time .din {
    font-weight: 400;
    transform: scaleX(.92);
    transform-origin: center;
}

.day-time .din:first-child {
    transform-origin: left;
}

.day-time .din:last-child {
    transform-origin: right;
}

.footer {
    display: flex;
    flex-direction: column;
    align-items: center;
}

.pager {
    display: flex;
    width: 768px;
    height: 30px;
    margin: 20px 0 57.5px;
    color: #666;
    font-size: 23px;
}

.pager div {
    display: flex;
    align-items: center;
    gap: 19px;
    width: 384px;
}

.pager-prev {
    padding-left: 144px;
    border-right: 1px solid #ccc;
}

.pager-next {
    padding-left: 139px;
}

.pager .pager-next {
    gap: 21px;
}

.home {
    width: 276px;
    height: 10px;
    border-radius: 5px;
    background-color: #000;
}
```
